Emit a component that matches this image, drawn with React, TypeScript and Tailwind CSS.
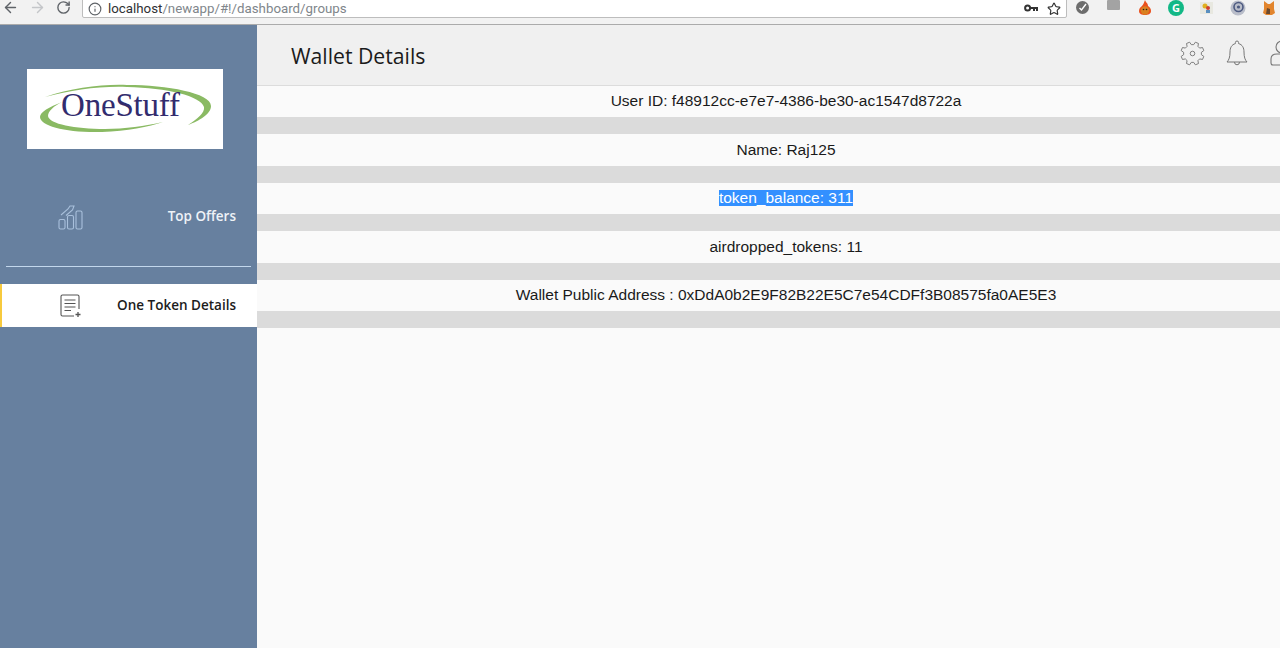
import { ArrowLeft, ArrowRight, Info, RotateCw, Star } from 'lucide-react';

const rows = [
    { label: 'User ID: f48912cc-e7e7-4386-be30-ac1547d8722a' },
    { label: 'Name: Raj125' },
    { label: 'token_balance: 311', selected: true },
    { label: 'airdropped_tokens: 11' },
    { label: 'Wallet Public Address : 0xDdA0b2E9F82B22E5C7e54CDFf3B08575fa0AE5E3' },
];

// cog outline with 8 teeth, points worked out around the centre
const gearPath = () => {
    const pts: string[] = [];
    for (let i = 0; i < 8; i++) {
        const a = (i * Math.PI) / 4 - Math.PI / 8;
        [[-0.2, 8.6], [-0.11, 11.2], [0.11, 11.2], [0.2, 8.6]].forEach(([da, r]) => {
            pts.push(`${(12 + r * Math.cos(a + da * 1.3)).toFixed(2)} ${(12 + r * Math.sin(a + da * 1.3)).toFixed(2)}`);
        });
    }
    return `M${pts.join(' L')}Z`;
};

const BrowserBar = () => (
    <div className="h-[25px] flex bg-[#f2f2f2] border-b border-[#ababab] overflow-hidden">
        <div className="flex items-center h-[16px] mt-[-1px]">
            <ArrowLeft className="ml-[2px] w-[17px] h-[17px] text-[#5f6368]" strokeWidth={2} />
            <ArrowRight className="ml-[10px] w-[17px] h-[17px] text-[#c4c6c9]" strokeWidth={2} />
            <RotateCw className="ml-[10px] w-[15px] h-[15px] text-[#5f6368]" strokeWidth={2.2} />
        </div>
        <div className="ml-[11px] w-[985px] h-[19px] mt-[-1px] bg-white border border-[#bdbdbd] rounded-b-[2px] flex items-center pl-[5px] pr-[5px]">
            <Info className="w-[14px] h-[14px] text-[#5f6368]" strokeWidth={2} />
            <span className="ml-[6px] text-[13.3px] font-['Roboto',sans-serif] text-[#80868b]">
                <span className="text-[#303134]">localhost</span>/newapp/#!/dashboard/groups
            </span>
            <svg className="ml-auto" width="14" height="10" viewBox="0 0 14 10" fill="none" stroke="#333">
                <circle cx="3.6" cy="4" r="2.5" strokeWidth="2" />
                <path d="M6 4 H14 M10 4 V7 M13 4 V7" strokeWidth="2" />
            </svg>
            <Star className="ml-[9px] w-[14px] h-[14px] text-[#333]" strokeWidth={2} />
        </div>
        <div className="flex items-start">
            <div className="ml-[9px] mt-[1px] w-[13px] h-[13px] rounded-full bg-[#6d6d6d] flex items-center justify-center">
                <svg width="9" height="9" viewBox="0 0 9 9"><path d="M1.5 5 L3.5 7 L8 1" stroke="#fff" strokeWidth="1.4" fill="none" /></svg>
            </div>
            <div className="ml-[18px] w-[13px] h-[10px] bg-[#a3a3a3] rounded-[1px]" />
            <svg className="ml-[17px]" width="16" height="17" viewBox="0 0 16 17">
                <path d="M8 0 C9 3 11 3 11 6 C13 7 14 9 14 11 C14 14 11 15 8 15 C5 15 2 14 2 11 C2 8 4 7 5 6 C6 5 7 3 8 0Z" fill="#ea4f1c" />
                <circle cx="8" cy="10.5" r="4.2" fill="#d9801f" />
                <circle cx="6.5" cy="9.5" r="0.8" fill="#222" />
                <circle cx="9.5" cy="9.5" r="0.8" fill="#222" />
            </svg>
            <div className="ml-[15px] w-[16px] h-[16px] rounded-full bg-[#13b886] text-white text-[11px] leading-[16px] text-center font-bold font-['Open_Sans',sans-serif]">G</div>
            <svg className="ml-[15px]" width="15" height="15" viewBox="0 0 15 15">
                <rect x="1" y="2" width="13" height="12" fill="#e8e8e0" />
                <circle cx="6" cy="6" r="2.5" fill="#e0b020" />
                <circle cx="9" cy="8" r="2" fill="#d04030" />
                <rect x="7" y="10" width="4" height="3" fill="#5a8fc0" />
            </svg>
            <svg className="ml-[16px]" width="16" height="16" viewBox="0 0 16 16">
                <circle cx="8" cy="8" r="7.5" fill="#b9bdc9" />
                <circle cx="8.5" cy="7" r="4.5" fill="none" stroke="#4d5a80" strokeWidth="1.6" />
                <circle cx="8.5" cy="7" r="1.6" fill="#4d5a80" />
            </svg>
            <svg className="ml-[15px]" width="16" height="16" viewBox="0 0 16 16">
                <path d="M3 1 L7 4 H9 L13 1 L13 9 L14 13 L11 15 H5 L2 13 L3 9Z" fill="#e2852e" />
                <path d="M6 8 L9 9 L9 14 L5 14Z" fill="#6b4a2e" />
            </svg>
        </div>
    </div>
);

const Logo = () => (
    <div className="w-[196px] h-[80px] bg-white relative overflow-hidden">
        <svg className="absolute inset-0" width="196" height="80" viewBox="0 0 196 80">
            <path d="M18 28 C45 19 75 15 100 16 C140 16 184 24 184 37 C184 45 172 52 161 56 C170 50 178 44 177 38 C174 27 140 19 100 18 C72 17 45 21 18 28Z" fill="#8aba63" />
            <path d="M35 33 C22 38 13 43 13 48 C13 57 40 64 75 63 C100 62 122 58 136 53 C118 57 98 60 78 60 C48 60 22 55 21 47 C21 42 27 37 35 33Z" fill="#8aba63" />
        </svg>
        <span className="absolute left-[34px] top-[16px] text-[33px] leading-[40px] tracking-[-0.2px] text-[#322c6e] font-['Liberation_Serif',serif]">OneStuff</span>
    </div>
);

const Sidebar = () => (
    <aside className="w-[257px] shrink-0 bg-[#67809f] flex flex-col font-['Open_Sans',sans-serif]">
        <div className="pt-[44px] pl-[27px]">
            <Logo />
        </div>
        <div className="mt-[43px] h-[46px] flex items-center pl-[58px] pr-[21px] justify-between">
            <svg className="mt-[6px]" width="26" height="26" viewBox="0 0 26 26" fill="none" stroke="#a9c0dc" strokeWidth="1.1">
                <rect x="1" y="14.5" width="6" height="9.5" rx="1.5" />
                <rect x="9.5" y="10.5" width="6" height="13.5" rx="1.5" />
                <rect x="18" y="6" width="6" height="18" rx="1.5" />
                <path d="M3 10 L10 4 L12 1 H16 L14.5 5 L8 10.5" />
            </svg>
            <span className="pt-[2px] text-[13.5px] font-semibold text-[#eef2f7]">Top Offers</span>
        </div>
        <div className="mt-[28px] mx-[6px] h-px bg-[#c3d7ec]" />
        <div className="mt-[17px] h-[43px] bg-white border-l-[2px] border-[#f7ca3e] flex items-center pl-[58px] pr-[21px] justify-between">
            <svg width="22" height="24" viewBox="0 0 22 24" fill="none" stroke="#555" strokeWidth="1.1">
                <path d="M19 15 V2.5 Q19 1 17.5 1 H2.5 Q1 1 1 2.5 V20.5 Q1 22 2.5 22 H14" />
                <path d="M4.5 6 H15.5 M4.5 9.5 H15.5 M4.5 13 H15.5 M4.5 16.5 H11" />
                <path d="M18 18 V23 M15.5 20.5 H20.5" strokeWidth="1.3" />
            </svg>
            <span className="text-[13.5px] font-semibold text-[#1c1c1c]">One Token Details</span>
        </div>
    </aside>
);

const Header = () => (
    <header className="h-[60.5px] bg-[#f0f0f0] border-b border-[#dcdcdc] flex items-center pl-[34px] overflow-hidden">
        <h1 className="pt-[2px] text-[21.2px] text-[#1b1b1b] font-['Open_Sans',sans-serif]">Wallet Details</h1>
        <div className="ml-auto flex items-center mt-[-3px]">
            <svg width="25" height="25" viewBox="0 0 24 24" fill="none" stroke="#777" strokeWidth="0.9">
                <path d={gearPath()} />
                <circle cx="12" cy="12" r="2.2" />
            </svg>
            <svg className="ml-[21px]" width="22" height="27" viewBox="0 0 22 27" fill="none" stroke="#777" strokeWidth="1">
                <path d="M11 1 a1.6 1.6 0 0 1 1.6 1.6 V3.6 C16.5 4.6 18 8 18 12 C18 17 19 20 21 22 H1 C3 20 4 17 4 12 C4 8 5.5 4.6 9.4 3.6 V2.6 A1.6 1.6 0 0 1 11 1Z" />
                <path d="M8.5 22 a2.5 2.8 0 0 0 5 0" />
            </svg>
            <svg className="ml-[22px] mr-[-14px] shrink-0" width="24" height="26" viewBox="0 0 24 26" fill="none" stroke="#777" strokeWidth="1.1">
                <circle cx="12" cy="7" r="6" />
                <path d="M3 25 Q1 25 1 23 V19 Q1 14 7 14 H17 Q23 14 23 19 V23 Q23 25 21 25Z" />
            </svg>
        </div>
    </header>
);

export default function App() {
    return (
        <div className="h-[648px] overflow-hidden flex flex-col bg-[#fafafa]">
            <BrowserBar />
            <div className="flex-1 flex min-h-0">
                <Sidebar />
                <main className="flex-1 min-w-0">
                    <Header />
                    <div className="font-['Liberation_Sans',sans-serif] text-[15.5px] leading-[16px] text-[#1a1a1a]">
                        {rows.map(row => (
                            <div key={row.label}>
                                <div className="h-[31.5px] pl-[35px] flex items-center justify-center">
                                    <span className={row.selected ? 'bg-[#3390ff] text-white' : ''}>{row.label}</span>
                                </div>
                                <div className="h-[17px] bg-[#dbdbdb]" />
                            </div>
                        ))}
                    </div>
                </main>
            </div>
        </div>
    );
}
